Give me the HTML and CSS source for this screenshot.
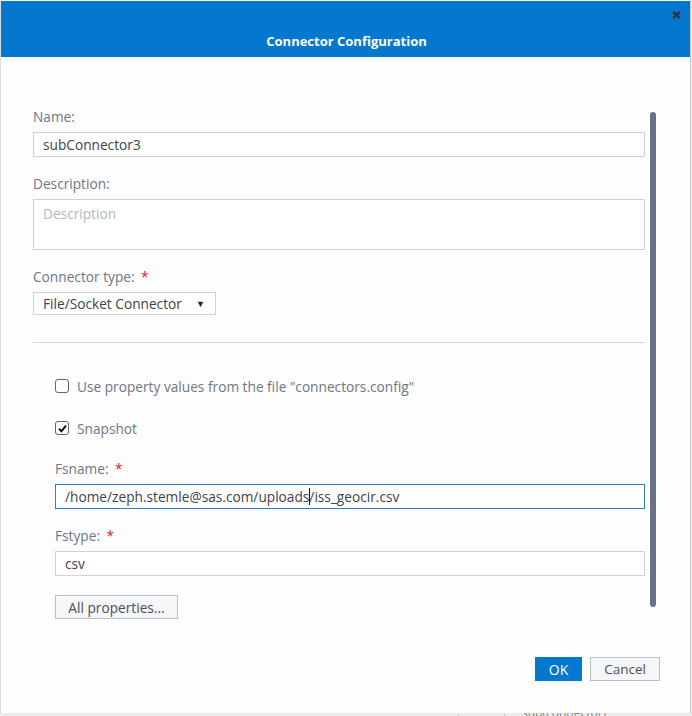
FILE: index.html
```html
<!DOCTYPE html>
<html>
<head>
<meta charset="utf-8">
<link rel="stylesheet" href="styles.css">
</head>
<body>
<div class="page">
  <div class="dialog">
    <div class="header">
      <span class="title">Connector Configuration</span>
      <span class="close">&#x2715;</span>
    </div>
    <div class="body">
      <div class="content">
        <div class="label">Name:</div>
        <div class="input"><span class="val">subConnector3</span></div>
        <div class="label">Description:</div>
        <div class="input textarea"><span class="ph">Description</span></div>
        <div class="label">Connector type: <span class="req">*</span></div>
        <div class="select"><span class="val">File/Socket Connector</span><span class="arrow">&#9660;</span></div>
        <div class="divider"></div>
        <div class="section">
          <div class="check-row"><span class="box"></span><span class="clabel">Use property values from the file "connectors.config"</span></div>
          <div class="check-row second"><span class="box checked"><svg width="11" height="11" viewBox="0 0 11 11"><path d="M2 5.8 L4.4 8.3 L9 2.6" fill="none" stroke="#111" stroke-width="2"/></svg></span><span class="clabel">Snapshot</span></div>
          <div class="label">Fsname: <span class="req">*</span></div>
          <div class="input focus"><span class="val">/home/zeph.stemle@sas.com/uploads</span><span class="caret"></span><span class="val">/iss_geocir.csv</span></div>
          <div class="label">Fstype: <span class="req">*</span></div>
          <div class="input"><span class="val">csv</span></div>
          <div class="btn-row"><span class="btn">All properties...</span></div>
        </div>
      </div>
      <div class="scroll-track"><div class="thumb"></div></div>
    </div>
    <div class="footer">
      <span class="btn primary">OK</span>
      <span class="btn cancel">Cancel</span>
    </div>
  </div>
  <div class="under">
    <div class="col c1"></div>
    <div class="col c2"></div>
    <div class="col c3"><span>sub(connector)</span></div>
  </div>
</div>
</body>
</html>
```
FILE: styles.css
```css
* { box-sizing: border-box; }
html, body { margin: 0; padding: 0; }
body {
  width: 692px;
  height: 716px;
  overflow: hidden;
  background: #ececec;
  font-family: "Open Sans", Lato, sans-serif;
  font-size: 13.7px;
}
.page { display: flex; flex-direction: column; }
.dialog {
  width: 691px;
  height: 713px;
  background: #fdfdfd;
  border-left: 1px solid #dcdcdc;
  border-right: 1px solid #c8c8c8;
  display: flex;
  flex-direction: column;
}
.header {
  position: relative;
  height: 56px;
  margin-top: 1px;
  background: #0478ce;
  display: flex;
  align-items: flex-end;
  justify-content: center;
  padding-bottom: 8px;
}
.title {
  color: #fff;
  font-weight: 700;
  font-size: 13px;
  line-height: 16px;
  margin-left: 2px;
}
.close {
  position: absolute;
  right: 9px;
  top: 7px;
  color: #2d3642;
  font-weight: 900;
  font-size: 11px;
  line-height: 14px;
  -webkit-text-stroke: 0.8px #2d3642;
}
.body {
  flex: 1;
  display: flex;
  padding-left: 32px;
}
.content {
  width: 612px;
  padding-top: 52px;
}
.label {
  color: #6d7686;
  line-height: 16px;
  margin-bottom: 7px;
}
.req { color: #d9262c; margin-left: 3px; }
.input {
  height: 25px;
  border: 1px solid #cdd0d6;
  background: #fff;
  display: flex;
  align-items: center;
  padding-left: 9px;
  margin-bottom: 19px;
  color: #404247;
  white-space: nowrap;
}
.input.textarea {
  height: 51px;
  align-items: flex-start;
  padding-top: 4px;
}
.ph { color: #b2b7bf; }
.input.focus { border-color: #2d7dc6; }
.caret {
  display: inline-block;
  width: 1px;
  height: 17px;
  background: #111;
  margin: 0 -1px 0 0;
}
.select {
  width: 183px;
  height: 23px;
  margin-top: 1px;
  border: 1px solid #cdd0d6;
  background: #fff;
  display: flex;
  align-items: center;
  padding-left: 9px;
  color: #404247;
}
.arrow {
  font-size: 9px;
  margin-left: 14px;
  color: #222;
}
.divider {
  height: 1px;
  background: #d8d8d8;
  margin-top: 27px;
}
.section {
  padding-left: 22px;
  padding-top: 35px;
}
.check-row {
  display: flex;
  align-items: center;
  height: 16px;
  color: #6d7686;
}
.check-row.second { margin-top: 26px; margin-bottom: 25px; }
.box {
  width: 14px;
  height: 14px;
  border: 1px solid #5c6679;
  border-radius: 3px;
  margin-right: 8px;
  display: flex;
  align-items: center;
  justify-content: center;
  background: #fff;
}
.btn-row { display: flex; }
.btn {
  display: inline-flex;
  align-items: center;
  justify-content: center;
  height: 24px;
  border: 1px solid #b9bfc9;
  background: #f5f6f8;
  color: #4a4e55;
  font-size: 13.7px;
}
.btn-row .btn { width: 123px; }
.scroll-track {
  width: 6px;
  margin-left: 5px;
  padding-top: 55px;
}
.thumb {
  width: 6px;
  height: 495px;
  background: #67718a;
  border-radius: 3px;
}
.footer {
  height: 56px;
  display: flex;
  justify-content: flex-end;
  align-items: flex-start;
  padding-right: 30px;
  gap: 8px;
}
.btn.primary {
  width: 47px;
  background: #0478ce;
  border-color: #0478ce;
  color: #fff;
  font-size: 14px;
}
.btn.cancel { width: 70px; font-size: 13.5px; }
.under {
  height: 3px;
  display: flex;
  overflow: hidden;
}
.col { height: 3px; }
.c1 { width: 458px; }
.c2 { width: 46px; border-left: 1px solid #cfcfcf; }
.c3 { border-left: 1px solid #cfcfcf; padding-left: 17px; color: #888; font-size: 12px; line-height: 12px; }
.c3 span { display: block; margin-top: -6px; }
```
